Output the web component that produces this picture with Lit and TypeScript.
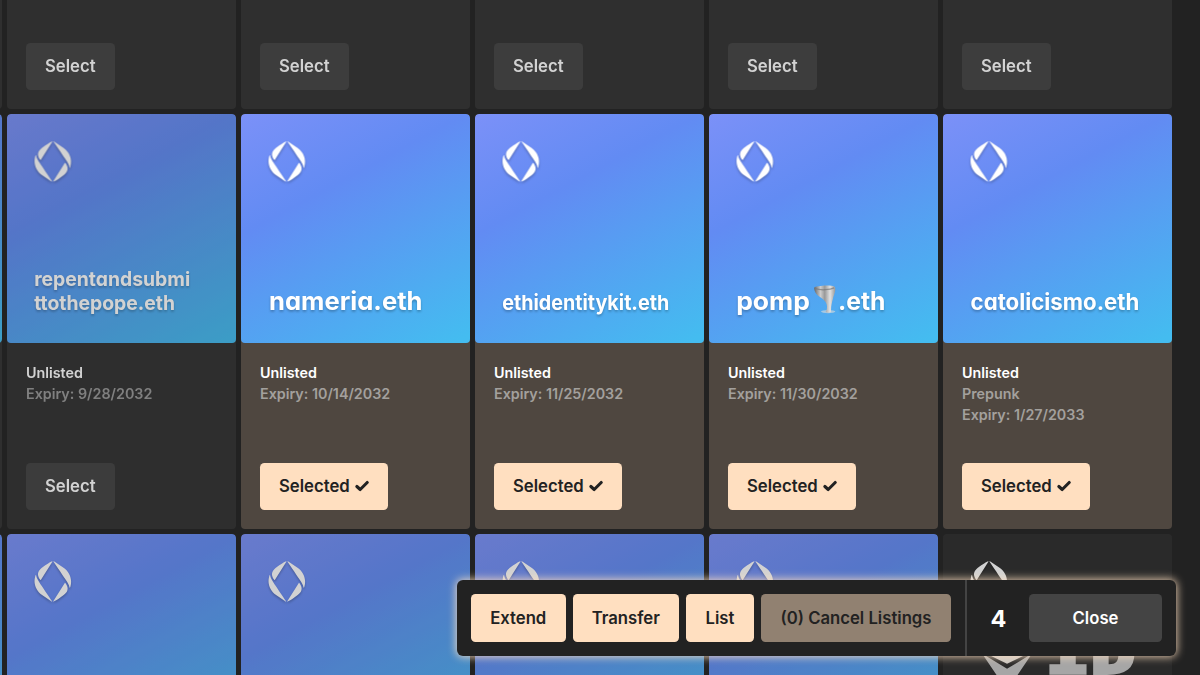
import { LitElement, html, svg, css, nothing } from "lit";
import { customElement, property } from "lit/decorators.js";

interface NameLine { text: string; x: number; y: number; w: number; size: number }
interface Item {
  lines?: NameLine[];
  tornado?: boolean;
  dark?: boolean;
  tag?: string;
  expiry?: string;
  selected?: boolean;
  action?: boolean;
}

const logo = svg`<g transform="translate(32.4 32) scale(0.214 0.207)">
  <path d="M98.3592 2.80337L34.8353 107.327C34.3371 108.147 33.1797 108.238 32.5617 107.505C26.9693 100.864 6.13478 72.615 31.9154 46.8673C55.4403 23.3726 85.4045 6.62129 96.5096 0.831705C97.7695 0.174847 99.0966 1.59007 98.3592 2.80337Z"/>
  <path d="M94.8459 230.385C96.1137 231.273 97.6758 229.759 96.8261 228.467C82.6374 206.886 35.4713 135.081 28.9559 124.302C22.5295 113.67 9.88976 96.001 8.83534 80.8842C8.7301 79.3751 6.64332 79.0687 6.11838 80.4879C5.27178 82.7767 4.37045 85.5085 3.53042 88.6292C-7.07427 128.023 8.32698 169.826 41.7753 193.238L94.8459 230.386Z"/>
  <path d="M103.571 228.526L167.095 124.003C167.593 123.183 168.751 123.092 169.369 123.825C174.961 130.465 195.796 158.715 170.015 184.463C146.49 207.957 116.526 224.709 105.421 230.498C104.161 231.155 102.834 229.74 103.571 228.526Z"/>
  <path d="M107.154 0.930762C105.886 0.0433954 104.324 1.5567 105.174 2.84902C119.363 24.4301 166.529 96.2354 173.044 107.014C179.471 117.646 192.11 135.315 193.165 150.432C193.27 151.941 195.357 152.247 195.882 150.828C196.728 148.539 197.63 145.808 198.47 142.687C209.074 103.293 193.673 61.4899 160.225 38.078L107.154 0.930762Z"/>
</g>`;

@customElement("name-card")
class NameCard extends LitElement {
  static styles = css`
    :host { display: block; height: 415px; }
    .card {
      height: 100%; display: flex; flex-direction: column; border-radius: 4px;
      overflow: hidden; background: #333; opacity: 0.8;
    }
    .card.selected { background: #4f4740; opacity: 1; }
    .card.dark { background: #2d2d2d; }
    .art { display: block; width: 229px; height: 229px; border-radius: 4px; flex: none; }
    .info { flex: 1; display: flex; flex-direction: column; align-items: flex-start; padding: 18.6px 19px 19px; }
    .status { font-size: 14.3px; font-weight: 600; line-height: 21.3px; color: #fff; }
    .meta { font-size: 14.3px; font-weight: 600; line-height: 21.3px; color: #999; }
    .selected .meta { color: #a3a09d; }
    .btn {
      margin-top: auto; height: 47.5px; padding: 0 19px; border: 0; border-radius: 4.5px;
      display: flex; align-items: center; gap: 5px; font: 600 16.7px Inter, sans-serif;
      background: #444; color: #fff;
    }
    .selected .btn { background: #ffdfc0; color: #222; }
    .check { width: 14px; height: 12px; }
    .glyphs { fill: #fff; filter: drop-shadow(0 2px 1.5px rgba(0,0,0,.25)); }
    .name { font-family: Inter, sans-serif; font-weight: 700; font-feature-settings: "cv11"; }
    .mark { font-family: "DejaVu Sans Mono", monospace; font-weight: 700; fill: #c8c8c8; stroke: #c8c8c8; stroke-width: 4px; }
  `;
  @property({ attribute: false }) item: Item = {};

  render() {
    const i = this.item;
    return html`<div class="card ${i.selected ? "selected" : ""} ${i.dark ? "dark" : ""}">
      <svg class="art" viewBox="0 0 270 270">
        <defs>
          <linearGradient id="bg" x1="190.5" y1="302" x2="-64" y2="-172.5" gradientUnits="userSpaceOnUse">
            <stop stop-color="#44BCF0"/><stop offset="0.428185" stop-color="#628BF3"/><stop offset="1" stop-color="#A099FF"/>
          </linearGradient>
          <linearGradient id="funnel" x1="0" x2="1"><stop stop-color="#666"/><stop offset=".3" stop-color="#ccc"/><stop offset=".5" stop-color="#999"/><stop offset=".75" stop-color="#e2e2e2"/><stop offset="1" stop-color="#999"/></linearGradient>
        </defs>
        <rect width="270" height="270" fill=${i.dark ? "#2d2d2d" : "url(#bg)"}></rect>
        <g class="glyphs">${logo}
          ${(i.lines ?? []).map(l => svg`<text class="name" x=${l.x} y=${l.y} font-size=${l.size} textLength=${l.w} lengthAdjust="spacingAndGlyphs">${l.text}</text>`)}
        </g>
        ${i.tornado ? svg`<g transform="translate(124.500 202)">
          <ellipse cx="16" cy="31" rx="8.500" ry="1.800" fill="#b9cfe0" opacity=".8"/>
          <path fill="url(#funnel)" d="M-0.500 3C1 0.500 20 -1 24 2C25.500 7 22.500 11 21.500 16C20.500 20 19 25 19.500 31.500C18 32.500 15 32.500 13 31.500C15 28 15.500 23 12.500 19C9.500 15 3 13 1 8.500C-0.200 6 -0.500 4.500 -0.500 3Z"/>
          <path fill="none" stroke="#777" stroke-width="1.500" opacity=".7" d="M1 4C7 6 18 5.500 23 3"/>
        </g>` : nothing}
        ${i.dark ? svg`<path fill="#f4efea" d="M53 142H98L75.500 153Z"/>
          <path fill="#c8c8c8" d="M46 141L75.500 159L105 141L86 169L75.500 180L65 169Z"/>
          <text class="mark" x="121" y="163.800" font-size="64" textLength="106" lengthAdjust="spacingAndGlyphs">ID</text>` : nothing}
      </svg>
      <div class="info">
        ${i.expiry ? html`<div class="status">Unlisted</div>` : nothing}
        ${i.tag ? html`<div class="meta">${i.tag}</div>` : nothing}
        ${i.expiry ? html`<div class="meta">Expiry: ${i.expiry}</div>` : nothing}
        ${i.action ? html`<button class="btn">${i.selected ? "Selected" : "Select"}${i.selected
          ? html`<svg class="check" viewBox="0 0 14 12"><path d="M1.900 6.500L5.200 9.500L12.200 2.500" fill="none" stroke="#222" stroke-width="3.100" stroke-linecap="round" stroke-linejoin="round"/></svg>` : nothing}</button>` : nothing}
      </div>
    </div>`;
  }
}

const blank: Item = {};
const open: Item = { action: true };
const items: Item[] = [
  blank, open, open, open, open, open,
  blank,
  { expiry: "9/28/2032", action: true, lines: [
    { text: "repentandsubmi", x: 32, y: 203, w: 184, size: 24 },
    { text: "ttothepope.eth", x: 32, y: 231, w: 166, size: 24 }] },
  { expiry: "10/14/2032", action: true, selected: true, lines: [{ text: "nameria.eth", x: 33, y: 230.8, w: 181, size: 30 }] },
  { expiry: "11/25/2032", action: true, selected: true, lines: [{ text: "ethidentitykit.eth", x: 32, y: 231, w: 197, size: 24.5 }] },
  { expiry: "11/30/2032", action: true, selected: true, tornado: true, lines: [
    { text: "pomp", x: 32, y: 230.8, w: 87, size: 30 },
    { text: ".eth", x: 152, y: 230.8, w: 56, size: 30 }] },
  { expiry: "1/27/2033", tag: "Prepunk", action: true, selected: true, lines: [{ text: "catolicismo.eth", x: 32.5, y: 231, w: 199, size: 26.5 }] },
  blank, blank, blank, blank, blank, { dark: true },
];

@customElement("app-root")
class AppRoot extends LitElement {
  static styles = css`
    :host { display: block; position: relative; width: 1200px; height: 675px; overflow: hidden; background: #222; font-family: Inter, sans-serif; }
    .clip { width: 1171.5px; height: 675px; overflow: hidden; }
    .grid { display: grid; grid-template-columns: repeat(6, 229px); gap: 5px; margin: -306px 0 0 -227px; width: 1399px; }
    .bar {
      position: absolute; left: 457px; top: 580px; width: 719px; height: 76px; display: flex;
      border-radius: 6px; background: #222; box-shadow: 0 0 9px 1px rgba(255,223,192,.85);
    }
    .actions { box-sizing: border-box; width: 510px; display: flex; align-items: center; gap: 7px; padding-left: 14px; border-right: 2px solid #444; }
    .summary { flex: 1; display: flex; align-items: center; justify-content: space-between; padding: 0 14px 0 23.5px; }
    .btn { height: 47.5px; padding: 0; border: 0; border-radius: 4.5px; background: #ffdfc0; color: #222; font: 600 16.7px Inter, sans-serif; white-space: nowrap; flex: none; }
    .extend { width: 94.5px; } .transfer { width: 106.5px; } .list { width: 68px; }
    .cancel { width: 190px; background: #918171; }
    .count { font-size: 23.5px; font-weight: 700; color: #fff; }
    .close { width: 133px; background: #444; color: #fff; }
  `;
  render() {
    return html`
      <div class="clip"><div class="grid">${items.map(i => html`<name-card .item=${i}></name-card>`)}</div></div>
      <div class="bar">
        <div class="actions">
          <button class="btn extend">Extend</button>
          <button class="btn transfer">Transfer</button>
          <button class="btn list">List</button>
          <button class="btn cancel">(0) Cancel Listings</button>
        </div>
        <div class="summary"><span class="count">4</span><button class="btn close">Close</button></div>
      </div>`;
  }
}
